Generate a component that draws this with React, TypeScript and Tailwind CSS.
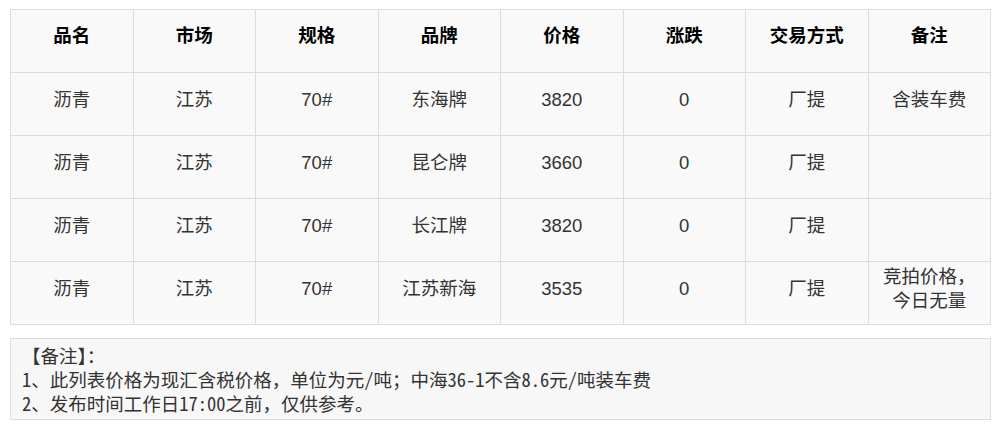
import React from 'react';

const headers = ['品名', '市场', '规格', '品牌', '价格', '涨跌', '交易方式', '备注'];

const rows: string[][] = [
  ['沥青', '江苏', '70#', '东海牌', '3820', '0', '厂提', '含装车费'],
  ['沥青', '江苏', '70#', '昆仑牌', '3660', '0', '厂提', ''],
  ['沥青', '江苏', '70#', '长江牌', '3820', '0', '厂提', ''],
  ['沥青', '江苏', '70#', '江苏新海', '3535', '0', '厂提', '竞拍价格，今日无量'],
];

const App = () => {
  return (
    <div className="bg-white w-[998px] h-[427px] pt-[9px] px-[10px] font-['Liberation_Sans','Noto_Sans_CJK_SC',sans-serif]">
      <table className="w-[981px] table-fixed border-collapse bg-[#f9f9f9] text-[18.5px]">
        <thead>
          <tr className="h-[63px]">
            {headers.map((h) => (
              <th key={h} className="border border-[#dddddd] font-bold text-black text-center align-middle pb-[10px]">
                {h}
              </th>
            ))}
          </tr>
        </thead>
        <tbody>
          {rows.map((r, i) => (
            <tr key={i} className="h-[63px]">
              {r.map((c, j) => (
                <td key={j} className="border border-[#dddddd] text-[#333333] text-center align-middle leading-[24px] px-2 pb-[8px]">
                  {j === 7 && c.includes('，') ? (
                    <>
                      竞拍价格，
                      <br />
                      今日无量
                    </>
                  ) : (
                    c
                  )}
                </td>
              ))}
            </tr>
          ))}
        </tbody>
      </table>
      <div className="mt-[13px] w-[981px] h-[82px] border border-[#dddddd] bg-[#f7f7f7] pl-[11px] pt-[4px] text-[18.5px] leading-[24px] text-[#333333] font-['Noto_Sans_Mono_CJK_SC','Liberation_Mono','Noto_Sans_CJK_SC',monospace]">
        <div>【备注】：</div>
        <div>1、此列表价格为现汇含税价格，单位为元/吨；中海36-1不含8.6元/吨装车费</div>
        <div>2、发布时间工作日17:00之前，仅供参考。</div>
      </div>
    </div>
  );
};

export default App;
